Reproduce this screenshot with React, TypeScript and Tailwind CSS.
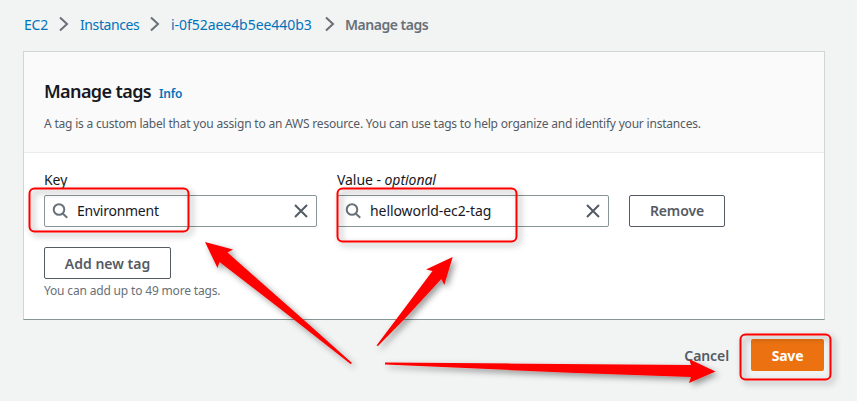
import React from 'react';

function Chevron({ className }: { className: string }) {
  return (
    <svg className={`h-[16px] w-[10px] shrink-0 ${className}`} viewBox="0 0 10 16" fill="none" stroke="#687078" strokeWidth="2">
      <path d="M1 1.5 L8 8 L1 14.5" />
    </svg>
  );
}

function SearchIcon() {
  return (
    <svg className="h-4 w-4 shrink-0" viewBox="0 0 16 16" fill="none" stroke="#687078" strokeWidth="2">
      <circle cx="7" cy="6.5" r="5.3" />
      <path d="M10.700 10.500 L15.200 14.700" />
    </svg>
  );
}

function CloseIcon() {
  return (
    <svg className="h-4 w-4 shrink-0" viewBox="0 0 16 16" fill="none" stroke="#545b64" strokeWidth="2">
      <path d="M2 2 L14 14 M14 2 L2 14" />
    </svg>
  );
}

function TagField({ label, value, className }: { label: React.ReactNode; value: React.ReactNode; className: string }) {
  return (
    <div className={className}>
      <div className="h-[26px] text-[14px] leading-[22px] tracking-[-0.05px]">{label}</div>
      <div className="flex h-8 items-center rounded-[2px] border border-[#879596] bg-white pr-[7px] pl-[7px]">
        <SearchIcon />
        <span className="ml-[9px] flex-1 text-[14px] leading-[22px]">{value}</span>
        <CloseIcon />
      </div>
    </div>
  );
}

function Annotations() {
  return (
    <svg className="pointer-events-none absolute top-0 left-0 h-[401px] w-[857px]" viewBox="0 0 857 401">
      <defs>
        <filter id="shade" x="0" y="0" width="857" height="401" filterUnits="userSpaceOnUse">
          <feDropShadow dx="3" dy="3" stdDeviation="3" floodColor="#000" floodOpacity="0.4" />
        </filter>
      </defs>
      <g filter="url(#shade)" fill="none" stroke="#ff0000" strokeWidth="2">
        <rect x="29.5" y="188.500" width="159" height="43" rx="5" />
        <rect x="337.5" y="188.500" width="179" height="53" rx="5" />
        <rect x="740.5" y="334.500" width="90" height="45" rx="5" />
      </g>
      <g filter="url(#shade)" fill="#ff0000">
        <path d="M205 242 L233 249.500 L227.500 252.500 L305 321 L352 363 L350.500 364 L283 311 L219.500 262 L217.500 268 Z" />
        <path d="M452.700 257 L444.300 285 L441.300 279 L404.300 319.300 L378 346 L376.500 345.500 L432.500 271 L426 269.500 Z" />
        <path d="M385 362.500 L691 365 L689 359 L715.500 371.500 L689 383 L691 377 L570 372.700 L385 364.500 Z" />
      </g>
    </svg>
  );
}

export default function App() {
  return (
    <div className="relative h-[401px] w-[857px] overflow-hidden bg-[#f2f3f3] font-['Noto_Sans',sans-serif] text-[#16191f]">
      <nav className="flex h-[51px] items-center pb-[3px] pl-6 text-[14px] whitespace-nowrap text-[#0073bb]">
        <span className="w-[35px] tracking-[-0.2px]">EC2</span>
        <Chevron className="mr-[11px]" />
        <span className="w-[70px] tracking-[-0.4px]">Instances</span>
        <Chevron className="mr-[11px]" />
        <span className="w-[154px] tracking-[-0.05px]">i-0f52aee4b5ee440b3</span>
        <Chevron className="mr-[10px]" />
        <span className="font-semibold tracking-[-0.48px] text-[#687078]">Manage tags</span>
      </nav>

      <section className="ml-[23px] h-[269px] w-[802px] border border-[#d0d5d5] border-b-[#879596] bg-white">
        <header className="h-[101px] border-b border-[#eaeded] bg-[#fafafa] pt-[25px] pl-5 whitespace-nowrap">
          <div className="flex h-7 items-baseline">
            <h1 className="w-[107px] text-[18px] leading-7 font-semibold tracking-[-0.6px]">Manage tags</h1>
            <a className="ml-2 text-[12px] font-semibold tracking-[-0.2px] text-[#0073bb]">Info</a>
          </div>
          <p className="mt-[9px] text-[12px] leading-[20px] tracking-[-0.2px] text-[#545b64]">
            A tag is a custom label that you assign to an AWS resource. You can use tags to help organize and identify your instances.
          </p>
        </header>
        <div className="pt-[16px] pl-5">
          <div className="flex items-end">
            <TagField className="w-[273px]" label="Key" value={<span className="tracking-[-0.25px]">Environment</span>} />
            <TagField className="ml-5 w-[272px]" label={<>Value - <i>optional</i></>} value={<span className="tracking-[-0.07px]">helloworld-ec2-tag</span>} />
            <button className="ml-5 h-8 w-[96px] rounded-[2px] border border-[#545b64] pb-px text-[14px] font-semibold tracking-[-0.1px] text-[#545b64]">Remove</button>
          </div>
          <button className="mt-5 block h-8 w-[127px] rounded-[2px] border border-[#545b64] text-[14px] font-semibold text-[#545b64]">Add new tag</button>
          <p className="mt-[3px] text-[12px] leading-[18px] tracking-[-0.17px] text-[#687078]">You can add up to 49 more tags.</p>
        </div>
      </section>

      <footer className="mt-[19px] flex h-8 items-center justify-end pr-[33px] text-[14px] font-semibold">
        <button className="mr-[22px] tracking-[-0.1px] text-[#545b64]">Cancel</button>
        <button className="h-8 w-[73px] rounded-[2px] bg-[#ec7211] font-bold tracking-[-0.2px] text-white">Save</button>
      </footer>
      <Annotations />
    </div>
  );
}
